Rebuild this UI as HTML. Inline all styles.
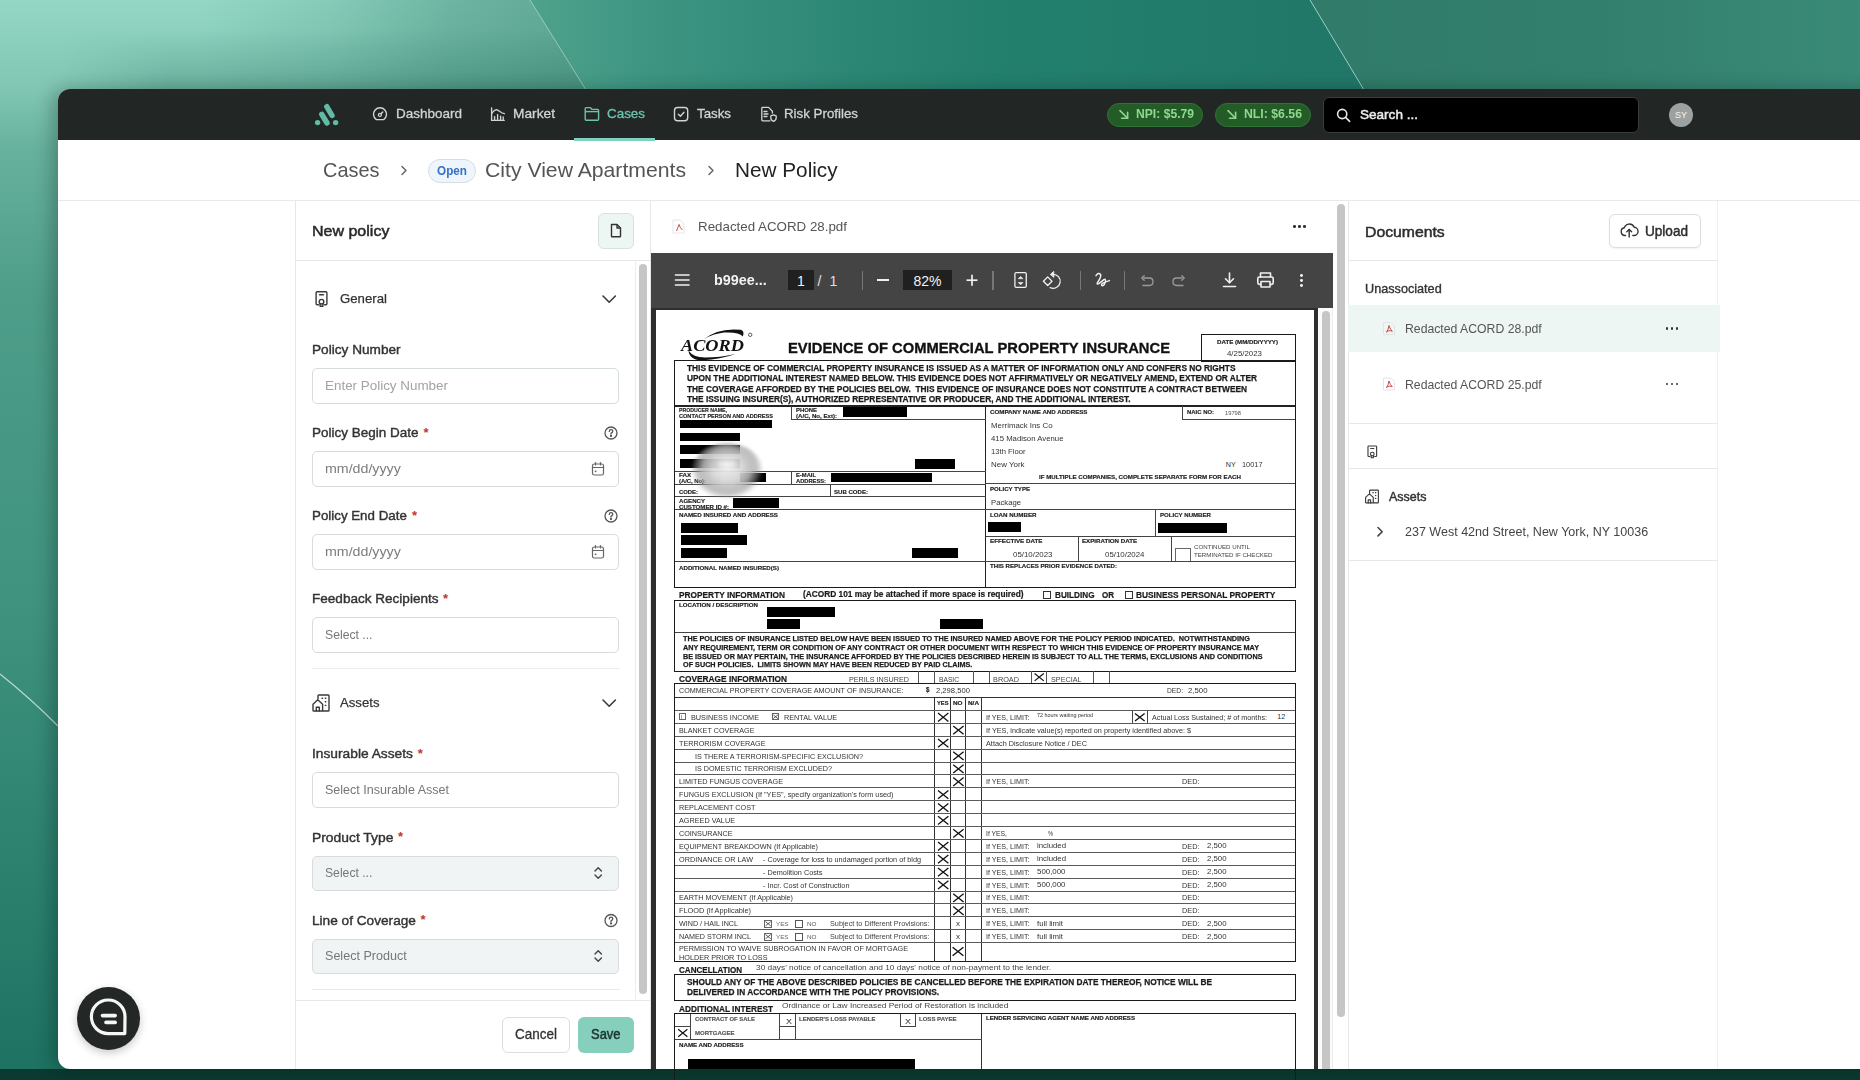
<!DOCTYPE html>
<html><head><meta charset="utf-8"><style>
html,body{margin:0;padding:0;}
body{width:1860px;height:1080px;overflow:hidden;position:relative;font-family:"Liberation Sans", sans-serif;background:#0b3b31;}
.t{position:absolute;white-space:nowrap;line-height:1;}
.r{position:absolute;}
svg{position:absolute;overflow:visible;}
</style></head><body>
<div class="r" style="left:0;top:0;width:1860px;height:1080px;background:linear-gradient(180deg,#94d7c5 0px,#80c6b3 89px,#66b19d 150px,#4d9d89 300px,#3f937f 600px,#2d826f 850px,#1d7262 1069px);"></div><div class="r" style="left:0;top:0;width:1860px;height:90px;background:linear-gradient(90deg,rgba(0,0,0,0) 0px,rgba(0,0,0,0) 200px,rgba(30,110,90,0.12) 330px,rgba(30,110,90,0.32) 450px,rgba(30,110,90,0.45) 586px);"></div><div class="r" style="left:0;top:0;width:600px;height:90px;background:linear-gradient(180deg,rgba(0,0,0,0) 30px,rgba(25,95,80,0.22) 89px);-webkit-mask-image:linear-gradient(90deg,transparent 0px,transparent 62px,black 170px);"></div><div class="r" style="left:0;top:0;width:1860px;height:90px;clip-path:polygon(530px 0,1310px 0,1364px 90px,586px 90px);background:linear-gradient(90deg,#4fa28c 530px,#3d9582 650px,#2c8774 850px,#23806d 1000px,#217869 1310px);"></div><div class="r" style="left:0;top:0;width:1860px;height:90px;clip-path:polygon(1310px 0,1860px 0,1860px 90px,1364px 90px);background:linear-gradient(90deg,#307b69 1310px,#337f6d 1600px,#3a8a78 1860px);"></div><div class="r" style="left:0;top:1069px;width:1860px;height:11px;background:#0a3a30;"></div><svg style="left:0;top:0" width="1860" height="1080"><line x1="530" y1="0" x2="586" y2="90" stroke="rgba(220,255,245,0.45)" stroke-width="1"/><line x1="1310" y1="0" x2="1364" y2="90" stroke="rgba(220,255,245,0.6)" stroke-width="1"/><path d="M0 674 Q30 698 58 726" stroke="rgba(220,240,235,0.8)" stroke-width="1.2" fill="none"/></svg><div class="r" style="left:58px;top:89px;width:1830px;height:980px;background:#fff;border-radius:12px;overflow:hidden;box-shadow:-6px 0 18px rgba(0,0,0,0.25);"></div><div class="r" style="left:58px;top:89px;width:1830px;height:51px;background:#222726;border-radius:12px 0 0 0;"></div><div class="r" style="left:295px;top:200px;width:1px;height:869px;background:#e4e8e8;"></div><div class="r" style="left:649.5px;top:200px;width:1.5px;height:869px;background:#e4e8e8;"></div><div class="r" style="left:295px;top:260px;width:355px;height:1px;background:#e4e8e8;"></div><div class="t" style="left:312px;top:223.2px;font-size:15px;color:#2a2a2a;font-weight:normal;-webkit-text-stroke:0.5px #2a2a2a;transform-origin:0 50%;transform:scaleX(1.0671);">New policy</div><div class="r" style="left:598px;top:213px;width:36px;height:35.5px;background:#eef6f3;border:1px solid #d6e2de;box-sizing:border-box;border-radius:6px;"></div><svg style="left:0;top:0" width="1" height="1" fill="none" stroke="#333" stroke-width="1.4" stroke-linejoin="round">
<path d="M611.5 224.5 H617 L620.5 228 V236.2 Q620.5 236.8 619.9 236.8 H612.1 Q611.5 236.8 611.5 236.2 Z"/><path d="M617 224.5 V228 H620.5"/></svg><div class="r" style="left:635px;top:261px;width:1px;height:739px;background:#eceeee;"></div><div class="r" style="left:639px;top:264px;width:8px;height:729.5px;background:#c6c6c6;border-radius:4px;"></div><div class="r" style="left:295px;top:999.5px;width:355px;height:1.5px;background:#e6e9e9;"></div><svg style="left:0;top:0" width="1" height="1" fill="none" stroke="#3a3a3a" stroke-width="1.4" stroke-linecap="round" stroke-linejoin="round">
<path d="M318.5 304.7 H317.1 Q316.1 304.7 316.1 303.7 V292.7 Q316.1 291.7 317.1 291.7 H325.9 Q326.9 291.7 326.9 292.7 V303.7 Q326.9 304.7 325.9 304.7 H324.5"/>
<line x1="319.5" y1="294.7" x2="323.5" y2="294.7"/>
<circle cx="321.5" cy="301.7" r="2.3"/><path d="M320.1 303.5 V306.3 H322.9 V303.5"/></svg><div class="t" style="left:339.5px;top:292.3px;font-size:13.6px;color:#333;font-weight:normal;-webkit-text-stroke:0.25px #333;transform-origin:0 50%;transform:scaleX(0.9716);">General</div><svg style="left:0;top:0" width="1" height="1" fill="none" stroke="#3a3a3a" stroke-width="1.6" stroke-linecap="round" stroke-linejoin="round"><path d="M603 296 L609.2 302.2 L615.4 296"/></svg><div class="t" style="left:312px;top:343.4px;font-size:13.4px;color:#333;font-weight:normal;-webkit-text-stroke:0.4px #333;transform-origin:0 50%;transform:scaleX(1.0175);">Policy Number</div><div class="r" style="left:312px;top:368px;width:307px;height:36px;background:#fff;border:1px solid #d7dddc;box-sizing:border-box;border-radius:5px;"></div><div class="t" style="left:325px;top:379.4px;font-size:13.4px;color:#a3a3a3;font-weight:normal;transform-origin:0 50%;transform:scaleX(1.0017);">Enter Policy Number</div><div class="t" style="left:312px;top:426.4px;font-size:13.4px;color:#333;font-weight:normal;-webkit-text-stroke:0.4px #333;transform-origin:0 50%;transform:scaleX(1.0066);">Policy Begin Date</div><div class="t" style="left:423.5px;top:425.6px;font-size:13px;color:#c0392b;font-weight:bold;">*</div><svg style="left:0;top:0" width="1" height="1" fill="none" stroke="#555" stroke-width="1.3" stroke-linecap="round"><circle cx="611" cy="433" r="6"/><path d="M609.3 431.4 Q609.3 429.6 611 429.6 Q612.8 429.6 612.8 431.3 Q612.8 432.5 611 433.4 V434"/><circle cx="611" cy="435.9" r="0.5" fill="#555"/></svg><div class="r" style="left:312px;top:451px;width:307px;height:36px;background:#fff;border:1px solid #d7dddc;box-sizing:border-box;border-radius:5px;"></div><div class="t" style="left:325px;top:462.4px;font-size:13.4px;color:#7d7d7d;font-weight:normal;transform-origin:0 50%;transform:scaleX(1.0611);">mm/dd/yyyy</div><svg style="left:0;top:0" width="1" height="1" fill="none" stroke="#666" stroke-width="1.2" stroke-linecap="round"><rect x="592.5" y="464" width="11" height="11" rx="1.8"/><line x1="592.5" y1="467.5" x2="603.5" y2="467.5"/><line x1="595.5" y1="462.5" x2="595.5" y2="465"/><line x1="600.5" y1="462.5" x2="600.5" y2="465"/><rect x="594.8" y="470.5" width="1.6" height="1.6" fill="#666" stroke="none"/></svg><div class="t" style="left:312px;top:509.4px;font-size:13.4px;color:#333;font-weight:normal;-webkit-text-stroke:0.4px #333;transform-origin:0 50%;transform:scaleX(0.9949);">Policy End Date</div><div class="t" style="left:412px;top:508.6px;font-size:13px;color:#c0392b;font-weight:bold;">*</div><svg style="left:0;top:0" width="1" height="1" fill="none" stroke="#555" stroke-width="1.3" stroke-linecap="round"><circle cx="611" cy="516" r="6"/><path d="M609.3 514.4 Q609.3 512.6 611 512.6 Q612.8 512.6 612.8 514.3 Q612.8 515.5 611 516.4 V517"/><circle cx="611" cy="518.9" r="0.5" fill="#555"/></svg><div class="r" style="left:312px;top:534px;width:307px;height:36px;background:#fff;border:1px solid #d7dddc;box-sizing:border-box;border-radius:5px;"></div><div class="t" style="left:325px;top:545.4px;font-size:13.4px;color:#7d7d7d;font-weight:normal;transform-origin:0 50%;transform:scaleX(1.0611);">mm/dd/yyyy</div><svg style="left:0;top:0" width="1" height="1" fill="none" stroke="#666" stroke-width="1.2" stroke-linecap="round"><rect x="592.5" y="547" width="11" height="11" rx="1.8"/><line x1="592.5" y1="550.5" x2="603.5" y2="550.5"/><line x1="595.5" y1="545.5" x2="595.5" y2="548"/><line x1="600.5" y1="545.5" x2="600.5" y2="548"/><rect x="594.8" y="553.5" width="1.6" height="1.6" fill="#666" stroke="none"/></svg><div class="t" style="left:312px;top:592.4px;font-size:13.4px;color:#333;font-weight:normal;-webkit-text-stroke:0.4px #333;transform-origin:0 50%;transform:scaleX(1.0116);">Feedback Recipients</div><div class="t" style="left:443px;top:591.6px;font-size:13px;color:#c0392b;font-weight:bold;">*</div><div class="r" style="left:312px;top:617px;width:307px;height:36px;background:#fff;border:1px solid #d7dddc;box-sizing:border-box;border-radius:5px;"></div><div class="t" style="left:325px;top:628.4px;font-size:13.4px;color:#777;font-weight:normal;transform-origin:0 50%;transform:scaleX(0.9115);">Select ...</div><div class="r" style="left:312px;top:668px;width:308px;height:1px;background:#e9eded;"></div><svg style="left:0;top:0" width="1" height="1" fill="none" stroke="#3a3a3a" stroke-width="1.4" stroke-linecap="round" stroke-linejoin="round">
<path d="M318 698.8 V695.8 Q318 695 318.8 695 H328.2 Q329 695 329 695.8 V710.2 Q329 711 328.2 711 H313.8 Q313 711 313 710.2 V704.2 L317.8 699.8 L322.6 704.2 V711"/>
<path d="M316.3 711 V707.2 H319.3 V711"/>
<line x1="322" y1="698.2" x2="322.5" y2="698.2"/><line x1="325.3" y1="698.2" x2="325.8" y2="698.2"/>
<line x1="325.3" y1="701.8" x2="325.8" y2="701.8"/><line x1="325.3" y1="705.4" x2="325.8" y2="705.4"/></svg><div class="t" style="left:340px;top:696.3px;font-size:13.6px;color:#333;font-weight:normal;-webkit-text-stroke:0.25px #333;transform-origin:0 50%;transform:scaleX(0.9682);">Assets</div><svg style="left:0;top:0" width="1" height="1" fill="none" stroke="#3a3a3a" stroke-width="1.6" stroke-linecap="round" stroke-linejoin="round"><path d="M603 700 L609.2 706.2 L615.4 700"/></svg><div class="t" style="left:312px;top:747.4px;font-size:13.4px;color:#333;font-weight:normal;-webkit-text-stroke:0.4px #333;transform-origin:0 50%;transform:scaleX(1.0278);">Insurable Assets</div><div class="t" style="left:417.7px;top:746.6px;font-size:13px;color:#c0392b;font-weight:bold;">*</div><div class="r" style="left:312px;top:772px;width:307px;height:36px;background:#fff;border:1px solid #d7dddc;box-sizing:border-box;border-radius:5px;"></div><div class="t" style="left:325px;top:783.4px;font-size:13.4px;color:#777;font-weight:normal;transform-origin:0 50%;transform:scaleX(0.9358);">Select Insurable Asset</div><div class="t" style="left:312px;top:830.9px;font-size:13.4px;color:#333;font-weight:normal;-webkit-text-stroke:0.4px #333;transform-origin:0 50%;transform:scaleX(1.0349);">Product Type</div><div class="t" style="left:398px;top:830.1px;font-size:13px;color:#c0392b;font-weight:bold;">*</div><div class="r" style="left:312px;top:855.5px;width:307px;height:35.0px;background:#f1f4f4;border:1px solid #d7dddc;box-sizing:border-box;border-radius:5px;"></div><div class="t" style="left:325px;top:866.4px;font-size:13.4px;color:#777;font-weight:normal;transform-origin:0 50%;transform:scaleX(0.9096);">Select ...</div><svg style="left:0;top:0" width="1" height="1" fill="none" stroke="#444" stroke-width="1.4" stroke-linecap="round" stroke-linejoin="round"><path d="M595 871 L598.2 867.8 L601.4 871"/><path d="M595 875 L598.2 878.2 L601.4 875"/></svg><div class="t" style="left:312px;top:913.9px;font-size:13.4px;color:#333;font-weight:normal;-webkit-text-stroke:0.4px #333;transform-origin:0 50%;transform:scaleX(1.0186);">Line of Coverage</div><div class="t" style="left:420.6px;top:913.1px;font-size:13px;color:#c0392b;font-weight:bold;">*</div><svg style="left:0;top:0" width="1" height="1" fill="none" stroke="#555" stroke-width="1.3" stroke-linecap="round"><circle cx="611" cy="920.5" r="6"/><path d="M609.3 918.9 Q609.3 917.1 611 917.1 Q612.8 917.1 612.8 918.8 Q612.8 920.0 611 920.9 V921.5"/><circle cx="611" cy="923.4" r="0.5" fill="#555"/></svg><div class="r" style="left:312px;top:938.5px;width:307px;height:35.0px;background:#f1f4f4;border:1px solid #d7dddc;box-sizing:border-box;border-radius:5px;"></div><div class="t" style="left:325px;top:949.4px;font-size:13.4px;color:#777;font-weight:normal;transform-origin:0 50%;transform:scaleX(0.9381);">Select Product</div><svg style="left:0;top:0" width="1" height="1" fill="none" stroke="#444" stroke-width="1.4" stroke-linecap="round" stroke-linejoin="round"><path d="M595 954 L598.2 950.8 L601.4 954"/><path d="M595 958 L598.2 961.2 L601.4 958"/></svg><div class="r" style="left:312px;top:989px;width:308px;height:1px;background:#e6eaea;"></div><div class="r" style="left:502px;top:1017px;width:68px;height:35.5px;background:#fff;border:1px solid #dadfdf;box-sizing:border-box;border-radius:6px;"></div><div class="t" style="left:515px;top:1028.2px;font-size:13.8px;color:#333;font-weight:normal;-webkit-text-stroke:0.3px #333;transform-origin:0 50%;transform:scaleX(0.9778);">Cancel</div><div class="r" style="left:578px;top:1017px;width:56px;height:35.5px;background:#86cfbd;border-radius:6px;"></div><div class="t" style="left:591.3px;top:1028.2px;font-size:13.8px;color:#1d3530;font-weight:normal;-webkit-text-stroke:0.5px #1d3530;transform-origin:0 50%;transform:scaleX(0.9379);">Save</div><div class="r" style="left:77px;top:987px;width:63px;height:63px;border-radius:50%;background:#232726;box-shadow:0 3px 9px rgba(0,0,0,0.22);"></div><svg style="left:0;top:0" width="1" height="1" fill="none" stroke="#f6f6f6" stroke-width="3.2" stroke-linecap="round" stroke-linejoin="round">
<path d="M124.8 1033.6 H108.3 A16.8 16.8 0 1 1 125 1016.8 Z"/>
<line x1="102.5" y1="1015.6" x2="115.2" y2="1015.6" stroke-width="3.6"/><line x1="106" y1="1022.4" x2="115.2" y2="1022.4" stroke-width="3.6"/></svg><svg style="left:0;top:0" width="1" height="1" fill="none" stroke-width="1"><path d="M673 220 H680 L684 224 V233 H673 Z" stroke="#e6e6e6"/><path d="M676.5 231 Q678 227 679 224.5 Q680 228 682.5 230" stroke="#c23a3a" stroke-width="0.9"/></svg><div class="t" style="left:698px;top:219.9px;font-size:13.5px;color:#555;font-weight:normal;transform-origin:0 50%;transform:scaleX(0.9878);">Redacted ACORD 28.pdf</div><div class="r" style="left:1293px;top:225px;width:2.5px;height:2.5px;border-radius:50%;background:#333;"></div><div class="r" style="left:1298px;top:225px;width:2.5px;height:2.5px;border-radius:50%;background:#333;"></div><div class="r" style="left:1303px;top:225px;width:2.5px;height:2.5px;border-radius:50%;background:#333;"></div><div class="r" style="left:651px;top:252.5px;width:682px;height:55.5px;background:#444444;"></div><div class="r" style="left:651px;top:308px;width:667px;height:761px;background:#2e2e2e;"></div><div class="r" style="left:1318px;top:308px;width:15px;height:761px;background:#fbfbfb;"></div><div class="r" style="left:1322px;top:311px;width:8px;height:770px;background:#c6c6c6;border-radius:4px 4px 0 0;clip-path:inset(0 0 12px 0);"></div><div class="r" style="left:1332px;top:308px;width:1px;height:761px;background:#ececec;"></div><div class="r" style="left:656px;top:310px;width:658px;height:759px;background:#ffffff;"></div><div class="r" style="left:1333px;top:200px;width:15px;height:869px;background:#ffffff;"></div><div class="r" style="left:1337px;top:204px;width:8px;height:813px;background:#c6c6c6;border-radius:4px;"></div><div class="r" style="left:1347.5px;top:200px;width:1.0px;height:869px;background:#e4e8e8;"></div><svg style="left:0;top:0" width="1" height="1" fill="none" stroke="#f0f0f0" stroke-width="1.6" stroke-linecap="round">
<line x1="675.5" y1="275" x2="689" y2="275"/><line x1="675.5" y1="280" x2="689" y2="280"/><line x1="675.5" y1="285" x2="689" y2="285"/></svg><div class="t" style="left:714px;top:272.9px;font-size:14.4px;color:#f2f2f2;font-weight:bold;transform-origin:0 50%;transform:scaleX(0.9979);">b99ee...</div><div class="r" style="left:788px;top:270px;width:26px;height:20px;background:#202020;"></div><div class="t" style="left:801px;top:273.6px;font-size:14px;color:#f2f2f2;font-weight:normal;transform:translateX(-50%) ;">1</div><div class="t" style="left:817.5px;top:273.6px;font-size:14px;color:#e0e0e0;font-weight:normal;">/</div><div class="t" style="left:829.5px;top:273.6px;font-size:14px;color:#e0e0e0;font-weight:normal;">1</div><div class="r" style="left:862.3px;top:270.5px;width:1.2000000000000455px;height:19.5px;background:#777;"></div><div class="r" style="left:877px;top:279.3px;width:12px;height:1.6999999999999886px;background:#f0f0f0;"></div><div class="r" style="left:903px;top:270px;width:49px;height:20px;background:#202020;"></div><div class="t" style="left:927.5px;top:273.6px;font-size:14px;color:#f2f2f2;font-weight:normal;transform:translateX(-50%) ;">82%</div><svg style="left:0;top:0" width="1" height="1" fill="none" stroke="#f0f0f0" stroke-width="1.7"><line x1="966.5" y1="280.2" x2="977.5" y2="280.2"/><line x1="972" y1="274.7" x2="972" y2="285.7"/></svg><div class="r" style="left:992.4px;top:270.5px;width:1.2000000000000455px;height:19.5px;background:#777;"></div><svg style="left:0;top:0" width="1" height="1" fill="none" stroke="#f0f0f0" stroke-width="1.3" stroke-linecap="round" stroke-linejoin="round">
<rect x="1014.9" y="272.6" width="11.4" height="14.8" rx="1.4"/>
<path d="M1018.6 278.4 L1020.6 276.4 L1022.6 278.4 Z" fill="#f0f0f0" stroke-width="0.8"/><path d="M1018.6 282.8 L1020.6 284.8 L1022.6 282.8 Z" fill="#f0f0f0" stroke-width="0.8"/>
<path d="M1043.4 281.2 L1047.7 276.9 L1052 281.2 L1047.7 285.5 Z"/>
<path d="M1052.8 274.3 A7 7 0 1 1 1050.2 287.6"/><path d="M1050.6 274.2 L1053.8 271.4 L1053.8 277 Z" fill="#f0f0f0" stroke-width="0.9"/>
<path stroke-width="1.5" d="M1096 275.6 Q1098.6 272.2 1100.4 274.2 Q1101.8 276.6 1097.6 282.4 Q1096.2 284.8 1098.8 283.6 Q1101.8 281.4 1103.8 279.6 Q1106.2 278.6 1105.2 282.2 Q1103.8 286.6 1101.6 285.4 Q1100.4 283.4 1109.4 280.6"/>
</svg><div class="r" style="left:1080px;top:270.5px;width:1.2000000000000455px;height:19.5px;background:#777;"></div><div class="r" style="left:1124.3px;top:270.5px;width:1.2000000000000455px;height:19.5px;background:#777;"></div><svg style="left:0;top:0" width="1" height="1" fill="none" stroke="#9a9a9a" stroke-width="1.3" stroke-linecap="round" stroke-linejoin="round">
<path d="M1144 278 H1149.5 Q1153 278 1153 281.8 Q1153 285.5 1149.5 285.5 H1143"/><path d="M1144.2 275.7 L1141.8 278 L1144.2 280.3"/>
<path d="M1182 278 H1176.5 Q1173 278 1173 281.8 Q1173 285.5 1176.5 285.5 H1183"/><path d="M1181.8 275.7 L1184.2 278 L1181.8 280.3"/>
</svg><svg style="left:0;top:0" width="1" height="1" fill="none" stroke="#f0f0f0" stroke-width="1.6" stroke-linecap="round" stroke-linejoin="round">
<line x1="1229.5" y1="273" x2="1229.5" y2="282.5"/><path d="M1225.5 278.8 L1229.5 282.8 L1233.5 278.8"/><line x1="1223.5" y1="286.5" x2="1235.5" y2="286.5"/>
<path d="M1260.5 277 V273 H1270.5 V277"/><rect x="1257.8" y="277" width="15.4" height="7.4" rx="1.6"/><rect x="1261" y="281.5" width="9" height="5.5" fill="#444444"/>
</svg><div class="r" style="left:1299.8px;top:273.8px;width:2.8px;height:2.8px;border-radius:50%;background:#f0f0f0;"></div><div class="r" style="left:1299.8px;top:278.8px;width:2.8px;height:2.8px;border-radius:50%;background:#f0f0f0;"></div><div class="r" style="left:1299.8px;top:283.8px;width:2.8px;height:2.8px;border-radius:50%;background:#f0f0f0;"></div><div class="r" style="left:1716.8px;top:200px;width:1.2000000000000455px;height:869px;background:#eef0f0;"></div><div class="r" style="left:1348px;top:260px;width:369px;height:1px;background:#e4e8e8;"></div><div class="t" style="left:1364.5px;top:223.7px;font-size:15px;color:#2d2d2d;font-weight:normal;-webkit-text-stroke:0.5px #2d2d2d;transform-origin:0 50%;transform:scaleX(1.0504);">Documents</div><div class="r" style="left:1608.5px;top:213.5px;width:92px;height:34px;background:#fff;border:1px solid #dadfdf;box-sizing:border-box;border-radius:6px;box-shadow:0 1px 2px rgba(0,0,0,0.06);"></div><svg style="left:0;top:0" width="1" height="1" fill="none" stroke="#333" stroke-width="1.4" stroke-linecap="round" stroke-linejoin="round">
<path d="M1625.5 235.5 H1624.8 A3.9 3.9 0 0 1 1624.3 227.8 A5.3 5.3 0 0 1 1634.2 227.2 A3.6 3.6 0 0 1 1633.6 235.5 H1632.8"/>
<line x1="1629.2" y1="229.5" x2="1629.2" y2="237"/><path d="M1626.8 231.8 L1629.2 229.4 L1631.6 231.8"/></svg><div class="t" style="left:1645px;top:223.6px;font-size:14px;color:#2d2d2d;font-weight:normal;-webkit-text-stroke:0.45px #2d2d2d;transform-origin:0 50%;transform:scaleX(0.9690);">Upload</div><div class="t" style="left:1365px;top:282.1px;font-size:13px;color:#333;font-weight:normal;-webkit-text-stroke:0.35px #333;transform-origin:0 50%;transform:scaleX(0.9736);">Unassociated</div><div class="r" style="left:1348px;top:305px;width:371.5px;height:46.5px;background:#eef6f3;"></div><svg style="left:0;top:0" width="1" height="1" fill="none" stroke-width="0.9"><path d="M1383.5 322.5 H1391.0 L1394.5 326.0 V334.5 H1383.5 Z" stroke="#e2e2e2"/><path d="M1386.5 332.5 Q1388.5 329.0 1389.0 325.5 Q1390.0 329.5 1392.5 331.5 M1386.7 331.5 Q1389.5 330.0 1392.0 331.0" stroke="#c23a3a"/></svg><div class="t" style="left:1404.5px;top:322.1px;font-size:13px;color:#555;font-weight:normal;transform-origin:0 50%;transform:scaleX(0.9411);">Redacted ACORD 28.pdf</div><svg style="left:0;top:0" width="1" height="1" fill="none" stroke-width="0.9"><path d="M1383.5 378 H1391.0 L1394.5 381.5 V390 H1383.5 Z" stroke="#e2e2e2"/><path d="M1386.5 388 Q1388.5 384.5 1389.0 381 Q1390.0 385 1392.5 387 M1386.7 387 Q1389.5 385.5 1392.0 386.5" stroke="#c23a3a"/></svg><div class="t" style="left:1404.5px;top:377.6px;font-size:13px;color:#555;font-weight:normal;transform-origin:0 50%;transform:scaleX(0.9411);">Redacted ACORD 25.pdf</div><div class="r" style="left:1665.5px;top:327.1px;width:2.5px;height:2.5px;border-radius:50%;background:#333;"></div><div class="r" style="left:1670.5px;top:327.1px;width:2.5px;height:2.5px;border-radius:50%;background:#333;"></div><div class="r" style="left:1675.5px;top:327.1px;width:2.5px;height:2.5px;border-radius:50%;background:#333;"></div><div class="r" style="left:1665.5px;top:382.6px;width:2.5px;height:2.5px;border-radius:50%;background:#333;"></div><div class="r" style="left:1670.5px;top:382.6px;width:2.5px;height:2.5px;border-radius:50%;background:#333;"></div><div class="r" style="left:1675.5px;top:382.6px;width:2.5px;height:2.5px;border-radius:50%;background:#333;"></div><div class="r" style="left:1348px;top:423px;width:369px;height:1px;background:#e4e8e8;"></div><div class="r" style="left:0;top:0;transform-origin:1372.3px 451.5px;transform:scale(0.8);"><svg style="left:0;top:0" width="1" height="1" fill="none" stroke="#3a3a3a" stroke-width="1.4" stroke-linecap="round" stroke-linejoin="round">
<path d="M1369.3 457.7 H1367.8999999999999 Q1366.8999999999999 457.7 1366.8999999999999 456.7 V445.7 Q1366.8999999999999 444.7 1367.8999999999999 444.7 H1376.7 Q1377.7 444.7 1377.7 445.7 V456.7 Q1377.7 457.7 1376.7 457.7 H1375.3"/>
<line x1="1370.3" y1="447.7" x2="1374.3" y2="447.7"/>
<circle cx="1372.3" cy="454.7" r="2.3"/><path d="M1370.8999999999999 456.5 V459.3 H1373.7 V456.5"/></svg></div><div class="r" style="left:1348px;top:467.5px;width:369px;height:1.0px;background:#e4e8e8;"></div><div class="r" style="left:0;top:0;transform-origin:1365.6px 496.5px;transform:scale(0.8);"><svg style="left:0;top:0" width="1" height="1" fill="none" stroke="#3a3a3a" stroke-width="1.4" stroke-linecap="round" stroke-linejoin="round">
<path d="M1370.6 492.3 V489.3 Q1370.6 488.5 1371.3999999999999 488.5 H1380.8 Q1381.6 488.5 1381.6 489.3 V503.7 Q1381.6 504.5 1380.8 504.5 H1366.3999999999999 Q1365.6 504.5 1365.6 503.7 V497.7 L1370.3999999999999 493.3 L1375.1999999999998 497.7 V504.5"/>
<path d="M1368.8999999999999 504.5 V500.7 H1371.8999999999999 V504.5"/>
<line x1="1374.6" y1="491.7" x2="1375.1" y2="491.7"/><line x1="1377.8999999999999" y1="491.7" x2="1378.3999999999999" y2="491.7"/>
<line x1="1377.8999999999999" y1="495.3" x2="1378.3999999999999" y2="495.3"/><line x1="1377.8999999999999" y1="498.9" x2="1378.3999999999999" y2="498.9"/></svg></div><div class="t" style="left:1388.5px;top:490.1px;font-size:13px;color:#333;font-weight:normal;-webkit-text-stroke:0.45px #333;transform-origin:0 50%;transform:scaleX(0.9586);">Assets</div><svg style="left:0;top:0" width="1" height="1" fill="none" stroke="#444" stroke-width="1.6" stroke-linecap="round" stroke-linejoin="round"><path d="M1378 527.5 L1382.2 531.7 L1378 535.9"/></svg><div class="t" style="left:1404.5px;top:525.7px;font-size:12.8px;color:#444;font-weight:normal;transform-origin:0 50%;transform:scaleX(0.9786);">237 West 42nd Street, New York, NY 10036</div><div class="r" style="left:1348px;top:560px;width:369px;height:1px;background:#e4e8e8;"></div><svg style="left:0;top:0" width="1" height="1">
<path d="M703.5 339.5 Q718 327.5 740.5 329.8 Q745 331 742.8 336.5 Q739 331.8 724 332.6 Q713 333.8 703.5 339.5 Z" fill="#111"/>
<path d="M688.5 350.5 Q689.5 360.5 703 360.3 Q720 359.5 735.5 354 Q720 357.6 705 357.6 Q693 357.4 688.5 350.5 Z" fill="#111"/>
<circle cx="750.2" cy="334.8" r="1.7" fill="none" stroke="#333" stroke-width="0.8"/>
</svg><div class="t" style="left:681px;top:338.4px;font-size:16.5px;color:#111;font-weight:bold;font-family:'Liberation Serif', serif;transform-origin:0 50%;transform:scaleX(1.1074);font-style:italic;">ACORD</div><div class="t" style="left:787.8px;top:340.6px;font-size:14.6px;color:#111;font-weight:bold;transform-origin:0 50%;transform:scaleX(1.0102);-webkit-text-stroke:0.3px #111;">EVIDENCE OF COMMERCIAL PROPERTY INSURANCE</div><div class="r" style="left:1200.55px;top:334.25px;width:95.20000000000005px;height:27.5px;border:1.5px solid #1a1a1a;box-sizing:border-box;"></div><div class="t" style="left:1217px;top:339.6px;font-size:5.4px;color:#222;font-weight:bold;transform-origin:0 50%;transform:scaleX(1.1399);-webkit-text-stroke:0.15px #222;">DATE (MM/DD/YYYY)</div><div class="t" style="left:1227px;top:350.3px;font-size:7px;color:#333;font-weight:normal;transform-origin:0 50%;transform:scaleX(1.1234);">4/25/2023</div><div class="r" style="left:674.15px;top:360.15px;width:621.7px;height:228.09999999999997px;border:1.7px solid #1a1a1a;box-sizing:border-box;"></div><div class="t" style="left:687px;top:364.0px;font-size:8.6px;color:#1a1a1a;font-weight:bold;transform-origin:0 50%;transform:scaleX(0.9686);-webkit-text-stroke:0.25px #1a1a1a;">THIS EVIDENCE OF COMMERCIAL PROPERTY INSURANCE IS ISSUED AS A MATTER OF INFORMATION ONLY AND CONFERS NO RIGHTS</div><div class="t" style="left:687px;top:374.3px;font-size:8.6px;color:#1a1a1a;font-weight:bold;transform-origin:0 50%;transform:scaleX(0.9682);-webkit-text-stroke:0.25px #1a1a1a;">UPON THE ADDITIONAL INTEREST NAMED BELOW. THIS EVIDENCE DOES NOT AFFIRMATIVELY OR NEGATIVELY AMEND, EXTEND OR ALTER</div><div class="t" style="left:687px;top:384.6px;font-size:8.6px;color:#1a1a1a;font-weight:bold;transform-origin:0 50%;transform:scaleX(0.9688);-webkit-text-stroke:0.25px #1a1a1a;">THE COVERAGE AFFORDED BY THE POLICIES BELOW.&nbsp; THIS EVIDENCE OF INSURANCE DOES NOT CONSTITUTE A CONTRACT BETWEEN</div><div class="t" style="left:687px;top:394.9px;font-size:8.6px;color:#1a1a1a;font-weight:bold;transform-origin:0 50%;transform:scaleX(0.9686);-webkit-text-stroke:0.25px #1a1a1a;">THE ISSUING INSURER(S), AUTHORIZED REPRESENTATIVE OR PRODUCER, AND THE ADDITIONAL INTEREST.</div><div class="r" style="left:675px;top:405px;width:620px;height:2px;background:#222;"></div><div class="r" style="left:985px;top:406px;width:1px;height:181px;background:#222;"></div><div class="t" style="left:679px;top:408.0px;font-size:5.4px;color:#222;font-weight:bold;transform-origin:0 50%;transform:scaleX(0.9654);-webkit-text-stroke:0.15px #222;">PRODUCER NAME,</div><div class="t" style="left:679px;top:414.0px;font-size:5.4px;color:#222;font-weight:bold;transform-origin:0 50%;transform:scaleX(1.0346);-webkit-text-stroke:0.15px #222;">CONTACT PERSON AND ADDRESS</div><div class="r" style="left:791px;top:406px;width:1px;height:13px;background:#444;"></div><div class="r" style="left:791px;top:419px;width:195px;height:1px;background:#444;"></div><div class="t" style="left:796px;top:408.2px;font-size:5.4px;color:#222;font-weight:bold;transform-origin:0 50%;transform:scaleX(1.0954);-webkit-text-stroke:0.15px #222;">PHONE</div><div class="t" style="left:796px;top:414.2px;font-size:5.4px;color:#222;font-weight:bold;transform-origin:0 50%;transform:scaleX(1.1315);-webkit-text-stroke:0.15px #222;">(A/C, No, Ext):</div><div class="r" style="left:842.8px;top:407.3px;width:63.80000000000007px;height:9.399999999999977px;background:#000;"></div><div class="r" style="left:679.5px;top:420.2px;width:92.5px;height:8.0px;background:#000;"></div><div class="r" style="left:679.5px;top:432.7px;width:60.299999999999955px;height:8.800000000000011px;background:#000;"></div><div class="r" style="left:679.5px;top:445px;width:60.299999999999955px;height:9px;background:#000;"></div><div class="r" style="left:679.5px;top:459.3px;width:60.5px;height:8.899999999999977px;background:#000;"></div><div class="r" style="left:914.6px;top:459.3px;width:40.799999999999955px;height:9.399999999999977px;background:#000;"></div><div class="r" style="left:675px;top:471px;width:311px;height:1px;background:#444;"></div><div class="t" style="left:679px;top:472.7px;font-size:5.4px;color:#222;font-weight:bold;transform-origin:0 50%;transform:scaleX(1.1446);-webkit-text-stroke:0.15px #222;">FAX</div><div class="t" style="left:679px;top:478.6px;font-size:5.4px;color:#222;font-weight:bold;transform-origin:0 50%;transform:scaleX(1.0861);-webkit-text-stroke:0.15px #222;">(A/C, No):</div><div class="r" style="left:740px;top:472.5px;width:25.600000000000023px;height:9.399999999999977px;background:#000;"></div><div class="r" style="left:791px;top:472px;width:1px;height:12px;background:#444;"></div><div class="t" style="left:796px;top:472.7px;font-size:5.4px;color:#222;font-weight:bold;transform-origin:0 50%;transform:scaleX(1.0765);-webkit-text-stroke:0.15px #222;">E-MAIL</div><div class="t" style="left:796px;top:478.6px;font-size:5.4px;color:#222;font-weight:bold;transform-origin:0 50%;transform:scaleX(1.0655);-webkit-text-stroke:0.15px #222;">ADDRESS:</div><div class="r" style="left:830.7px;top:472.5px;width:101.69999999999993px;height:9.5px;background:#000;"></div><div class="r" style="left:675px;top:484px;width:311px;height:1px;background:#444;"></div><div class="t" style="left:679px;top:489.6px;font-size:5.4px;color:#222;font-weight:bold;transform-origin:0 50%;transform:scaleX(1.0935);-webkit-text-stroke:0.15px #222;">CODE:</div><div class="r" style="left:830px;top:484px;width:1px;height:13px;background:#444;"></div><div class="t" style="left:834px;top:489.6px;font-size:5.4px;color:#222;font-weight:bold;transform-origin:0 50%;transform:scaleX(1.1240);-webkit-text-stroke:0.15px #222;">SUB CODE:</div><div class="r" style="left:675px;top:496px;width:311px;height:1px;background:#444;"></div><div class="t" style="left:679px;top:498.6px;font-size:5.4px;color:#222;font-weight:bold;transform-origin:0 50%;transform:scaleX(1.1266);-webkit-text-stroke:0.15px #222;">AGENCY</div><div class="t" style="left:679px;top:504.6px;font-size:5.4px;color:#222;font-weight:bold;transform-origin:0 50%;transform:scaleX(1.1380);-webkit-text-stroke:0.15px #222;">CUSTOMER ID #:</div><div class="r" style="left:732.7px;top:497.8px;width:46.299999999999955px;height:9.800000000000011px;background:#000;"></div><div class="r" style="left:675px;top:509px;width:311px;height:1px;background:#444;"></div><div class="t" style="left:679px;top:513.4px;font-size:5.4px;color:#222;font-weight:bold;transform-origin:0 50%;transform:scaleX(1.1491);-webkit-text-stroke:0.15px #222;">NAMED INSURED AND ADDRESS</div><div class="r" style="left:681px;top:523.2px;width:57px;height:9.599999999999909px;background:#000;"></div><div class="r" style="left:681px;top:535.4px;width:65.60000000000002px;height:9.800000000000068px;background:#000;"></div><div class="r" style="left:681px;top:547.9px;width:46px;height:9.700000000000045px;background:#000;"></div><div class="r" style="left:912.3px;top:547.9px;width:45.700000000000045px;height:9.700000000000045px;background:#000;"></div><div class="r" style="left:675px;top:561px;width:311px;height:1px;background:#444;"></div><div class="t" style="left:679px;top:565.6px;font-size:5.4px;color:#222;font-weight:bold;transform-origin:0 50%;transform:scaleX(1.1447);-webkit-text-stroke:0.15px #222;">ADDITIONAL NAMED INSURED(S)</div><div class="t" style="left:989.5px;top:409.6px;font-size:5.4px;color:#222;font-weight:bold;transform-origin:0 50%;transform:scaleX(1.1462);-webkit-text-stroke:0.15px #222;">COMPANY NAME AND ADDRESS</div><div class="r" style="left:1182px;top:406px;width:1px;height:14px;background:#444;"></div><div class="r" style="left:1182px;top:419px;width:113px;height:1px;background:#444;"></div><div class="t" style="left:1186.5px;top:410.4px;font-size:5.4px;color:#222;font-weight:bold;transform-origin:0 50%;transform:scaleX(1.0992);-webkit-text-stroke:0.15px #222;">NAIC NO:</div><div class="t" style="left:1225px;top:410.8px;font-size:5.5px;color:#555;font-weight:normal;transform-origin:0 50%;transform:scaleX(1.0460);">19798</div><div class="t" style="left:990.5px;top:422.3px;font-size:7.2px;color:#333;font-weight:normal;transform-origin:0 50%;transform:scaleX(1.0921);">Merrimack Ins Co</div><div class="t" style="left:990.5px;top:435.1px;font-size:7.2px;color:#333;font-weight:normal;transform-origin:0 50%;transform:scaleX(1.0818);">415 Madison Avenue</div><div class="t" style="left:990.5px;top:447.9px;font-size:7.2px;color:#333;font-weight:normal;transform-origin:0 50%;transform:scaleX(1.0656);">13th Floor</div><div class="t" style="left:990.5px;top:460.7px;font-size:7.2px;color:#333;font-weight:normal;transform-origin:0 50%;transform:scaleX(1.1029);">New York</div><div class="t" style="left:1225.7px;top:460.7px;font-size:7.2px;color:#333;font-weight:normal;transform-origin:0 50%;transform:scaleX(1.0000);">NY</div><div class="t" style="left:1242.2px;top:460.7px;font-size:7.2px;color:#333;font-weight:normal;transform-origin:0 50%;transform:scaleX(1.0250);">10017</div><div class="t" style="left:1038.5px;top:474.9px;font-size:5.4px;color:#222;font-weight:bold;transform-origin:0 50%;transform:scaleX(1.1439);-webkit-text-stroke:0.15px #222;">IF MULTIPLE COMPANIES, COMPLETE SEPARATE FORM FOR EACH</div><div class="r" style="left:986px;top:483px;width:309px;height:1px;background:#444;"></div><div class="t" style="left:989.5px;top:487.3px;font-size:5.4px;color:#222;font-weight:bold;transform-origin:0 50%;transform:scaleX(1.1248);-webkit-text-stroke:0.15px #222;">POLICY TYPE</div><div class="t" style="left:990.5px;top:498.8px;font-size:7.5px;color:#333;font-weight:normal;transform-origin:0 50%;transform:scaleX(1.0278);">Package</div><div class="r" style="left:986px;top:509px;width:309px;height:1px;background:#444;"></div><div class="t" style="left:989.5px;top:512.7px;font-size:5.4px;color:#222;font-weight:bold;transform-origin:0 50%;transform:scaleX(1.1499);-webkit-text-stroke:0.15px #222;">LOAN NUMBER</div><div class="r" style="left:1155px;top:510px;width:1px;height:26px;background:#444;"></div><div class="t" style="left:1159.5px;top:512.7px;font-size:5.4px;color:#222;font-weight:bold;transform-origin:0 50%;transform:scaleX(1.1298);-webkit-text-stroke:0.15px #222;">POLICY NUMBER</div><div class="r" style="left:987.5px;top:522px;width:33.5px;height:10px;background:#000;"></div><div class="r" style="left:1158.3px;top:523px;width:68.70000000000005px;height:10px;background:#000;"></div><div class="r" style="left:986px;top:536px;width:309px;height:1px;background:#444;"></div><div class="t" style="left:989.5px;top:538.6px;font-size:5.4px;color:#222;font-weight:bold;transform-origin:0 50%;transform:scaleX(1.1554);-webkit-text-stroke:0.15px #222;">EFFECTIVE DATE</div><div class="r" style="left:1078px;top:536px;width:1px;height:26px;background:#444;"></div><div class="t" style="left:1082.2px;top:538.6px;font-size:5.4px;color:#222;font-weight:bold;transform-origin:0 50%;transform:scaleX(1.1381);-webkit-text-stroke:0.15px #222;">EXPIRATION DATE</div><div class="r" style="left:1171px;top:536px;width:1px;height:26px;background:#444;"></div><div class="t" style="left:1012.5px;top:551.4px;font-size:7px;color:#333;font-weight:normal;transform-origin:0 50%;transform:scaleX(1.1271);">05/10/2023</div><div class="t" style="left:1105.2px;top:551.4px;font-size:7px;color:#333;font-weight:normal;transform-origin:0 50%;transform:scaleX(1.1271);">05/10/2024</div><div class="r" style="left:1175px;top:548.4px;width:16px;height:13.5px;border:1px solid #666;border-bottom:none;box-sizing:border-box;"></div><div class="t" style="left:1194.3px;top:544.6px;font-size:5.6px;color:#444;font-weight:normal;transform-origin:0 50%;transform:scaleX(1.0987);">CONTINUED UNTIL</div><div class="t" style="left:1194.3px;top:552.9px;font-size:5.6px;color:#444;font-weight:normal;transform-origin:0 50%;transform:scaleX(1.0998);">TERMINATED IF CHECKED</div><div class="r" style="left:986px;top:561px;width:309px;height:1px;background:#444;"></div><div class="t" style="left:989.5px;top:564.2px;font-size:5.4px;color:#222;font-weight:bold;transform-origin:0 50%;transform:scaleX(1.1317);-webkit-text-stroke:0.15px #222;">THIS REPLACES PRIOR EVIDENCE DATED:</div><div class="t" style="left:679px;top:591.0px;font-size:8.5px;color:#1a1a1a;font-weight:bold;transform-origin:0 50%;transform:scaleX(0.9786);-webkit-text-stroke:0.2px #1a1a1a;">PROPERTY INFORMATION</div><div class="t" style="left:803.4px;top:591.2px;font-size:8.2px;color:#1a1a1a;font-weight:bold;transform-origin:0 50%;transform:scaleX(1.0159);-webkit-text-stroke:0.2px #1a1a1a;">(ACORD 101 may be attached if more space is required)</div><div class="r" style="left:1043px;top:590.6px;width:8.3px;height:8.3px;border:1px solid #333;box-sizing:border-box;"></div><div class="t" style="left:1054.9px;top:591.0px;font-size:8.5px;color:#1a1a1a;font-weight:bold;transform-origin:0 50%;transform:scaleX(0.9612);-webkit-text-stroke:0.2px #1a1a1a;">BUILDING</div><div class="t" style="left:1102px;top:591.0px;font-size:8.5px;color:#1a1a1a;font-weight:bold;transform-origin:0 50%;transform:scaleX(0.9412);-webkit-text-stroke:0.2px #1a1a1a;">OR</div><div class="r" style="left:1124.6px;top:590.6px;width:8.3px;height:8.3px;border:1px solid #333;box-sizing:border-box;"></div><div class="t" style="left:1136px;top:591.0px;font-size:8.5px;color:#1a1a1a;font-weight:bold;transform-origin:0 50%;transform:scaleX(0.9816);-webkit-text-stroke:0.2px #1a1a1a;">BUSINESS PERSONAL PROPERTY</div><div class="r" style="left:674.2px;top:599.9000000000001px;width:621.6px;height:71.99999999999997px;border:1.6px solid #1a1a1a;box-sizing:border-box;"></div><div class="t" style="left:679px;top:603.3px;font-size:5.4px;color:#222;font-weight:bold;transform-origin:0 50%;transform:scaleX(1.1434);-webkit-text-stroke:0.15px #222;">LOCATION / DESCRIPTION</div><div class="r" style="left:766.5px;top:607px;width:68.79999999999995px;height:10.200000000000045px;background:#000;"></div><div class="r" style="left:766.5px;top:619.4px;width:33.299999999999955px;height:9.600000000000023px;background:#000;"></div><div class="r" style="left:940.3px;top:619.4px;width:42.700000000000045px;height:9.600000000000023px;background:#000;"></div><div class="r" style="left:675px;top:632px;width:620px;height:1px;background:#444;"></div><div class="t" style="left:683px;top:635.1px;font-size:7.6px;color:#1a1a1a;font-weight:bold;transform-origin:0 50%;transform:scaleX(0.9547);-webkit-text-stroke:0.25px #1a1a1a;">THE POLICIES OF INSURANCE LISTED BELOW HAVE BEEN ISSUED TO THE INSURED NAMED ABOVE FOR THE POLICY PERIOD INDICATED.&nbsp; NOTWITHSTANDING</div><div class="t" style="left:683px;top:643.8px;font-size:7.6px;color:#1a1a1a;font-weight:bold;transform-origin:0 50%;transform:scaleX(0.9558);-webkit-text-stroke:0.25px #1a1a1a;">ANY REQUIREMENT, TERM OR CONDITION OF ANY CONTRACT OR OTHER DOCUMENT WITH RESPECT TO WHICH THIS EVIDENCE OF PROPERTY INSURANCE MAY</div><div class="t" style="left:683px;top:652.6px;font-size:7.6px;color:#1a1a1a;font-weight:bold;transform-origin:0 50%;transform:scaleX(0.9553);-webkit-text-stroke:0.25px #1a1a1a;">BE ISSUED OR MAY PERTAIN, THE INSURANCE AFFORDED BY THE POLICIES DESCRIBED HEREIN IS SUBJECT TO ALL THE TERMS, EXCLUSIONS AND CONDITIONS</div><div class="t" style="left:683px;top:661.3px;font-size:7.6px;color:#1a1a1a;font-weight:bold;transform-origin:0 50%;transform:scaleX(0.9537);-webkit-text-stroke:0.25px #1a1a1a;">OF SUCH POLICIES.&nbsp; LIMITS SHOWN MAY HAVE BEEN REDUCED BY PAID CLAIMS.</div><div class="t" style="left:679px;top:675.0px;font-size:8.5px;color:#1a1a1a;font-weight:bold;transform-origin:0 50%;transform:scaleX(0.9788);-webkit-text-stroke:0.2px #1a1a1a;">COVERAGE INFORMATION</div><div class="t" style="left:849px;top:676.4px;font-size:7px;color:#444;font-weight:normal;transform-origin:0 50%;transform:scaleX(1.0281);">PERILS INSURED</div><div class="r" style="left:918px;top:671px;width:1px;height:13px;background:#555;"></div><div class="r" style="left:934px;top:671px;width:1px;height:13px;background:#555;"></div><div class="r" style="left:973px;top:671px;width:1px;height:13px;background:#555;"></div><div class="r" style="left:989px;top:671px;width:1px;height:13px;background:#555;"></div><div class="r" style="left:1031px;top:671px;width:1px;height:13px;background:#555;"></div><div class="r" style="left:1046px;top:671px;width:1px;height:13px;background:#555;"></div><div class="r" style="left:1093px;top:671px;width:1px;height:13px;background:#555;"></div><div class="r" style="left:1109px;top:671px;width:1px;height:13px;background:#555;"></div><div class="t" style="left:938.6px;top:676.5px;font-size:6.8px;color:#444;font-weight:normal;transform-origin:0 50%;transform:scaleX(0.9801);">BASIC</div><div class="t" style="left:992.5px;top:676.5px;font-size:6.8px;color:#444;font-weight:normal;transform-origin:0 50%;transform:scaleX(1.0756);">BROAD</div><svg style="left:0;top:0" width="1" height="1"><path d="M1034.6000000000001 673.5200000000001 L1043.8 680.88 M1043.8 673.5200000000001 L1034.6000000000001 680.88" stroke="#111" stroke-width="1.2" fill="none"/></svg><div class="t" style="left:1051px;top:676.5px;font-size:6.8px;color:#444;font-weight:normal;transform-origin:0 50%;transform:scaleX(1.0620);">SPECIAL</div><div class="r" style="left:674.2px;top:683.1px;width:621.6px;height:279.20000000000005px;border:1.6px solid #1a1a1a;box-sizing:border-box;"></div><div class="r" style="left:675px;top:697px;width:620px;height:1px;background:#333;"></div><div class="t" style="left:679px;top:687.1px;font-size:7px;color:#333;font-weight:normal;transform-origin:0 50%;transform:scaleX(1.0319);">COMMERCIAL PROPERTY COVERAGE AMOUNT OF INSURANCE:</div><div class="t" style="left:926px;top:687.3px;font-size:6.5px;color:#222;font-weight:bold;transform-origin:0 50%;transform:scaleX(0.9655);-webkit-text-stroke:0.15px #222;">$</div><div class="t" style="left:936px;top:686.8px;font-size:7px;color:#333;font-weight:normal;transform-origin:0 50%;transform:scaleX(1.0913);">2,298,500</div><div class="t" style="left:1167px;top:687.1px;font-size:7px;color:#333;font-weight:normal;transform-origin:0 50%;transform:scaleX(0.9561);">DED:</div><div class="t" style="left:1188.3px;top:686.8px;font-size:7px;color:#333;font-weight:normal;transform-origin:0 50%;transform:scaleX(1.1123);">2,500</div><div class="r" style="left:934px;top:697px;width:1px;height:265px;background:#333;"></div><div class="r" style="left:950px;top:697px;width:1px;height:265px;background:#333;"></div><div class="r" style="left:965px;top:697px;width:1px;height:265px;background:#333;"></div><div class="r" style="left:981px;top:697px;width:1px;height:265px;background:#333;"></div><div class="t" style="left:936.8px;top:701.3px;font-size:5.2px;color:#222;font-weight:bold;transform-origin:0 50%;transform:scaleX(1.1068);-webkit-text-stroke:0.15px #222;">YES</div><div class="t" style="left:953px;top:701.3px;font-size:5.2px;color:#222;font-weight:bold;transform-origin:0 50%;transform:scaleX(1.2209);-webkit-text-stroke:0.15px #222;">NO</div><div class="t" style="left:967.5px;top:701.3px;font-size:5.2px;color:#222;font-weight:bold;transform-origin:0 50%;transform:scaleX(1.2308);-webkit-text-stroke:0.15px #222;">N/A</div><div class="r" style="left:675px;top:710px;width:620px;height:1px;background:#5a5a5a;"></div><svg style="left:0;top:0" width="1" height="1"><path d="M938.0 713.09 L948.4000000000001 721.41 M948.4000000000001 713.09 L938.0 721.41" stroke="#111" stroke-width="1.3" fill="none"/></svg><div class="r" style="left:675px;top:723px;width:620px;height:1px;background:#5a5a5a;"></div><div class="t" style="left:679px;top:726.7px;font-size:7px;color:#333;font-weight:normal;transform-origin:0 50%;transform:scaleX(1.0285);">BLANKET COVERAGE</div><svg style="left:0;top:0" width="1" height="1"><path d="M953.1999999999999 725.99 L963.6 734.31 M963.6 725.99 L953.1999999999999 734.31" stroke="#111" stroke-width="1.3" fill="none"/></svg><div class="r" style="left:675px;top:736px;width:620px;height:1px;background:#5a5a5a;"></div><div class="t" style="left:679px;top:739.6px;font-size:7px;color:#333;font-weight:normal;transform-origin:0 50%;transform:scaleX(1.0344);">TERRORISM COVERAGE</div><svg style="left:0;top:0" width="1" height="1"><path d="M938.0 738.89 L948.4000000000001 747.2099999999999 M948.4000000000001 738.89 L938.0 747.2099999999999" stroke="#111" stroke-width="1.3" fill="none"/></svg><div class="r" style="left:675px;top:749px;width:620px;height:1px;background:#5a5a5a;"></div><svg style="left:0;top:0" width="1" height="1"><path d="M953.1999999999999 751.7900000000001 L963.6 760.11 M963.6 751.7900000000001 L953.1999999999999 760.11" stroke="#111" stroke-width="1.3" fill="none"/></svg><div class="r" style="left:675px;top:762px;width:620px;height:1px;background:#5a5a5a;"></div><svg style="left:0;top:0" width="1" height="1"><path d="M953.1999999999999 764.69 L963.6 773.01 M963.6 764.69 L953.1999999999999 773.01" stroke="#111" stroke-width="1.3" fill="none"/></svg><div class="r" style="left:675px;top:774px;width:620px;height:1px;background:#5a5a5a;"></div><div class="t" style="left:679px;top:778.3px;font-size:7px;color:#333;font-weight:normal;transform-origin:0 50%;transform:scaleX(1.0324);">LIMITED FUNGUS COVERAGE</div><svg style="left:0;top:0" width="1" height="1"><path d="M953.1999999999999 777.59 L963.6 785.91 M963.6 777.59 L953.1999999999999 785.91" stroke="#111" stroke-width="1.3" fill="none"/></svg><div class="r" style="left:675px;top:787px;width:620px;height:1px;background:#5a5a5a;"></div><div class="t" style="left:679px;top:791.2px;font-size:7px;color:#333;font-weight:normal;transform-origin:0 50%;transform:scaleX(1.0360);">FUNGUS EXCLUSION (If "YES", specify organization's form used)</div><svg style="left:0;top:0" width="1" height="1"><path d="M938.0 790.49 L948.4000000000001 798.81 M948.4000000000001 790.49 L938.0 798.81" stroke="#111" stroke-width="1.3" fill="none"/></svg><div class="r" style="left:675px;top:800px;width:620px;height:1px;background:#5a5a5a;"></div><div class="t" style="left:679px;top:804.1px;font-size:7px;color:#333;font-weight:normal;transform-origin:0 50%;transform:scaleX(1.0368);">REPLACEMENT COST</div><svg style="left:0;top:0" width="1" height="1"><path d="M938.0 803.39 L948.4000000000001 811.7099999999999 M948.4000000000001 803.39 L938.0 811.7099999999999" stroke="#111" stroke-width="1.3" fill="none"/></svg><div class="r" style="left:675px;top:813px;width:620px;height:1px;background:#5a5a5a;"></div><div class="t" style="left:679px;top:817.0px;font-size:7px;color:#333;font-weight:normal;transform-origin:0 50%;transform:scaleX(1.0379);">AGREED VALUE</div><svg style="left:0;top:0" width="1" height="1"><path d="M938.0 816.2900000000001 L948.4000000000001 824.61 M948.4000000000001 816.2900000000001 L938.0 824.61" stroke="#111" stroke-width="1.3" fill="none"/></svg><div class="r" style="left:675px;top:826px;width:620px;height:1px;background:#5a5a5a;"></div><div class="t" style="left:679px;top:829.9px;font-size:7px;color:#333;font-weight:normal;transform-origin:0 50%;transform:scaleX(1.0341);">COINSURANCE</div><svg style="left:0;top:0" width="1" height="1"><path d="M953.1999999999999 829.19 L963.6 837.51 M963.6 829.19 L953.1999999999999 837.51" stroke="#111" stroke-width="1.3" fill="none"/></svg><div class="r" style="left:675px;top:839px;width:620px;height:1px;background:#5a5a5a;"></div><div class="t" style="left:679px;top:842.8px;font-size:7px;color:#333;font-weight:normal;transform-origin:0 50%;transform:scaleX(1.0397);">EQUIPMENT BREAKDOWN (If Applicable)</div><svg style="left:0;top:0" width="1" height="1"><path d="M938.0 842.09 L948.4000000000001 850.41 M948.4000000000001 842.09 L938.0 850.41" stroke="#111" stroke-width="1.3" fill="none"/></svg><div class="r" style="left:675px;top:852px;width:620px;height:1px;background:#5a5a5a;"></div><div class="t" style="left:679px;top:855.7px;font-size:7px;color:#333;font-weight:normal;transform-origin:0 50%;transform:scaleX(1.0377);">ORDINANCE OR LAW</div><svg style="left:0;top:0" width="1" height="1"><path d="M938.0 854.99 L948.4000000000001 863.31 M948.4000000000001 854.99 L938.0 863.31" stroke="#111" stroke-width="1.3" fill="none"/></svg><div class="r" style="left:675px;top:865px;width:620px;height:1px;background:#5a5a5a;"></div><svg style="left:0;top:0" width="1" height="1"><path d="M938.0 867.89 L948.4000000000001 876.2099999999999 M948.4000000000001 867.89 L938.0 876.2099999999999" stroke="#111" stroke-width="1.3" fill="none"/></svg><div class="r" style="left:675px;top:878px;width:620px;height:1px;background:#5a5a5a;"></div><svg style="left:0;top:0" width="1" height="1"><path d="M938.0 880.7900000000001 L948.4000000000001 889.11 M948.4000000000001 880.7900000000001 L938.0 889.11" stroke="#111" stroke-width="1.3" fill="none"/></svg><div class="r" style="left:675px;top:891px;width:620px;height:1px;background:#5a5a5a;"></div><div class="t" style="left:679px;top:894.4px;font-size:7px;color:#333;font-weight:normal;transform-origin:0 50%;transform:scaleX(1.0343);">EARTH MOVEMENT (If Applicable)</div><svg style="left:0;top:0" width="1" height="1"><path d="M953.1999999999999 893.69 L963.6 902.01 M963.6 893.69 L953.1999999999999 902.01" stroke="#111" stroke-width="1.3" fill="none"/></svg><div class="r" style="left:675px;top:903px;width:620px;height:1px;background:#5a5a5a;"></div><div class="t" style="left:679px;top:907.3px;font-size:7px;color:#333;font-weight:normal;transform-origin:0 50%;transform:scaleX(1.0516);">FLOOD (If Applicable)</div><svg style="left:0;top:0" width="1" height="1"><path d="M953.1999999999999 906.59 L963.6 914.91 M963.6 906.59 L953.1999999999999 914.91" stroke="#111" stroke-width="1.3" fill="none"/></svg><div class="r" style="left:675px;top:916px;width:620px;height:1px;background:#5a5a5a;"></div><div class="t" style="left:679px;top:920.2px;font-size:7px;color:#333;font-weight:normal;transform-origin:0 50%;transform:scaleX(1.0225);">WIND / HAIL INCL</div><div class="t" style="left:956.3px;top:921.3px;font-size:6.5px;color:#333;font-weight:normal;transform-origin:0 50%;transform:scaleX(1.2308);">x</div><div class="r" style="left:675px;top:929px;width:620px;height:1px;background:#5a5a5a;"></div><div class="t" style="left:679px;top:933.1px;font-size:7px;color:#333;font-weight:normal;transform-origin:0 50%;transform:scaleX(1.0245);">NAMED STORM INCL</div><div class="t" style="left:956.3px;top:934.2px;font-size:6.5px;color:#333;font-weight:normal;transform-origin:0 50%;transform:scaleX(1.2308);">x</div><div class="r" style="left:675px;top:942px;width:620px;height:1px;background:#5a5a5a;"></div><div class="r" style="left:679.3px;top:713.1px;width:7.2px;height:7.2px;border:1px solid #666;box-sizing:border-box;"></div><div class="t" style="left:681.2px;top:714.8px;font-size:5px;color:#555;font-weight:normal;transform-origin:0 50%;transform:scaleX(1.0787);">I</div><div class="t" style="left:690.5px;top:713.8px;font-size:7px;color:#333;font-weight:normal;transform-origin:0 50%;transform:scaleX(1.0404);">BUSINESS INCOME</div><div class="r" style="left:772px;top:713.1px;width:7.2px;height:7.2px;border:1px solid #666;box-sizing:border-box;"></div><svg style="left:0;top:0" width="1" height="1"><path d="M773.296 714.8568 L777.904 718.5432000000001 M777.904 714.8568 L773.296 718.5432000000001" stroke="#444" stroke-width="0.9" fill="none"/></svg><div class="t" style="left:783.6px;top:713.8px;font-size:7px;color:#333;font-weight:normal;transform-origin:0 50%;transform:scaleX(1.0348);">RENTAL VALUE</div><div class="t" style="left:695px;top:752.5px;font-size:7px;color:#333;font-weight:normal;transform-origin:0 50%;transform:scaleX(1.0324);">IS THERE A TERRORISM-SPECIFIC EXCLUSION?</div><div class="t" style="left:695px;top:765.4px;font-size:7px;color:#333;font-weight:normal;transform-origin:0 50%;transform:scaleX(1.0279);">IS DOMESTIC TERRORISM EXCLUDED?</div><div class="t" style="left:762.5px;top:855.7px;font-size:7px;color:#333;font-weight:normal;transform-origin:0 50%;transform:scaleX(1.0384);">- Coverage for loss to undamaged portion of bldg</div><div class="t" style="left:762.5px;top:868.6px;font-size:7px;color:#333;font-weight:normal;transform-origin:0 50%;transform:scaleX(1.0404);">- Demolition Costs</div><div class="t" style="left:762.5px;top:881.5px;font-size:7px;color:#333;font-weight:normal;transform-origin:0 50%;transform:scaleX(1.0437);">- Incr. Cost of Construction</div><div class="r" style="left:764px;top:919.65px;width:8.2px;height:8.2px;border:1px solid #666;box-sizing:border-box;"></div><svg style="left:0;top:0" width="1" height="1"><path d="M765.476 921.6508 L770.724 925.8492 M770.724 921.6508 L765.476 925.8492" stroke="#444" stroke-width="0.9" fill="none"/></svg><div class="t" style="left:776.2px;top:920.7px;font-size:6px;color:#666;font-weight:normal;transform-origin:0 50%;transform:scaleX(1.0403);">YES</div><div class="r" style="left:795px;top:919.65px;width:8.2px;height:8.2px;border:1px solid #555;box-sizing:border-box;"></div><div class="t" style="left:807px;top:920.7px;font-size:6px;color:#555;font-weight:normal;transform-origin:0 50%;transform:scaleX(1.0556);">NO</div><div class="t" style="left:830px;top:920.2px;font-size:7px;color:#444;font-weight:normal;transform-origin:0 50%;transform:scaleX(1.0409);">Subject to Different Provisions:</div><div class="r" style="left:764px;top:932.55px;width:8.2px;height:8.2px;border:1px solid #666;box-sizing:border-box;"></div><svg style="left:0;top:0" width="1" height="1"><path d="M765.476 934.5508 L770.724 938.7492 M770.724 934.5508 L765.476 938.7492" stroke="#444" stroke-width="0.9" fill="none"/></svg><div class="t" style="left:776.2px;top:933.6px;font-size:6px;color:#666;font-weight:normal;transform-origin:0 50%;transform:scaleX(1.0403);">YES</div><div class="r" style="left:795px;top:932.55px;width:8.2px;height:8.2px;border:1px solid #555;box-sizing:border-box;"></div><div class="t" style="left:807px;top:933.6px;font-size:6px;color:#555;font-weight:normal;transform-origin:0 50%;transform:scaleX(1.0556);">NO</div><div class="t" style="left:830px;top:933.1px;font-size:7px;color:#444;font-weight:normal;transform-origin:0 50%;transform:scaleX(1.0409);">Subject to Different Provisions:</div><div class="t" style="left:679px;top:944.8px;font-size:7px;color:#333;font-weight:normal;transform-origin:0 50%;transform:scaleX(1.0353);">PERMISSION TO WAIVE SUBROGATION IN FAVOR OF MORTGAGE</div><div class="t" style="left:679px;top:953.6px;font-size:7px;color:#333;font-weight:normal;transform-origin:0 50%;transform:scaleX(1.0372);">HOLDER PRIOR TO LOSS</div><svg style="left:0;top:0" width="1" height="1"><path d="M952.6 947.18 L963.4 955.82 M963.4 947.18 L952.6 955.82" stroke="#111" stroke-width="1.4" fill="none"/></svg><div class="t" style="left:986px;top:713.8px;font-size:7px;color:#333;font-weight:normal;transform-origin:0 50%;transform:scaleX(1.0194);">If YES, LIMIT:</div><div class="t" style="left:1037px;top:714.2px;font-size:4.6px;color:#333;font-weight:normal;transform-origin:0 50%;transform:scaleX(1.1789);">72 hours waiting period</div><div class="r" style="left:1132px;top:710.5px;width:15.7px;height:12.9px;border-left:1px solid #444;border-right:1px solid #444;box-sizing:border-box;"></div><svg style="left:0;top:0" width="1" height="1"><path d="M1135.0 713.41 L1144.6 721.09 M1144.6 713.41 L1135.0 721.09" stroke="#111" stroke-width="1.3" fill="none"/></svg><div class="t" style="left:1151.5px;top:713.8px;font-size:7px;color:#333;font-weight:normal;transform-origin:0 50%;transform:scaleX(1.0297);">Actual Loss Sustained; # of months:</div><div class="t" style="left:1277.2px;top:713.4px;font-size:7.2px;color:#333;font-weight:normal;transform-origin:0 50%;transform:scaleX(1.0000);">12</div><div class="t" style="left:986px;top:726.7px;font-size:7px;color:#333;font-weight:normal;transform-origin:0 50%;transform:scaleX(1.0316);">If YES, indicate value(s) reported on property identified above: $</div><div class="t" style="left:986px;top:739.6px;font-size:7px;color:#333;font-weight:normal;transform-origin:0 50%;transform:scaleX(1.0426);">Attach Disclosure Notice / DEC</div><div class="t" style="left:986px;top:778.3px;font-size:7px;color:#333;font-weight:normal;transform-origin:0 50%;transform:scaleX(1.0194);">If YES, LIMIT:</div><div class="t" style="left:1182.3px;top:778.3px;font-size:7px;color:#333;font-weight:normal;transform-origin:0 50%;transform:scaleX(1.0458);">DED:</div><div class="t" style="left:986px;top:829.9px;font-size:7px;color:#333;font-weight:normal;transform-origin:0 50%;transform:scaleX(0.9690);">If YES,</div><div class="t" style="left:1048px;top:829.9px;font-size:7px;color:#333;font-weight:normal;transform-origin:0 50%;transform:scaleX(0.8020);">%</div><div class="t" style="left:986px;top:842.8px;font-size:7px;color:#333;font-weight:normal;transform-origin:0 50%;transform:scaleX(1.0194);">If YES, LIMIT:</div><div class="t" style="left:1182.3px;top:842.8px;font-size:7px;color:#333;font-weight:normal;transform-origin:0 50%;transform:scaleX(1.0458);">DED:</div><div class="t" style="left:1036.5px;top:842.2px;font-size:7.2px;color:#333;font-weight:normal;transform-origin:0 50%;transform:scaleX(1.0828);">included</div><div class="t" style="left:1206.8px;top:842.2px;font-size:7.2px;color:#333;font-weight:normal;transform-origin:0 50%;transform:scaleX(1.0833);">2,500</div><div class="t" style="left:986px;top:855.7px;font-size:7px;color:#333;font-weight:normal;transform-origin:0 50%;transform:scaleX(1.0194);">If YES, LIMIT:</div><div class="t" style="left:1182.3px;top:855.7px;font-size:7px;color:#333;font-weight:normal;transform-origin:0 50%;transform:scaleX(1.0458);">DED:</div><div class="t" style="left:1036.5px;top:855.1px;font-size:7.2px;color:#333;font-weight:normal;transform-origin:0 50%;transform:scaleX(1.0828);">included</div><div class="t" style="left:1206.8px;top:855.1px;font-size:7.2px;color:#333;font-weight:normal;transform-origin:0 50%;transform:scaleX(1.0833);">2,500</div><div class="t" style="left:986px;top:868.6px;font-size:7px;color:#333;font-weight:normal;transform-origin:0 50%;transform:scaleX(1.0194);">If YES, LIMIT:</div><div class="t" style="left:1182.3px;top:868.6px;font-size:7px;color:#333;font-weight:normal;transform-origin:0 50%;transform:scaleX(1.0458);">DED:</div><div class="t" style="left:1036.5px;top:868.0px;font-size:7.2px;color:#333;font-weight:normal;transform-origin:0 50%;transform:scaleX(1.0968);">500,000</div><div class="t" style="left:1206.8px;top:868.0px;font-size:7.2px;color:#333;font-weight:normal;transform-origin:0 50%;transform:scaleX(1.0833);">2,500</div><div class="t" style="left:986px;top:881.5px;font-size:7px;color:#333;font-weight:normal;transform-origin:0 50%;transform:scaleX(1.0194);">If YES, LIMIT:</div><div class="t" style="left:1182.3px;top:881.5px;font-size:7px;color:#333;font-weight:normal;transform-origin:0 50%;transform:scaleX(1.0458);">DED:</div><div class="t" style="left:1036.5px;top:880.9px;font-size:7.2px;color:#333;font-weight:normal;transform-origin:0 50%;transform:scaleX(1.0968);">500,000</div><div class="t" style="left:1206.8px;top:880.9px;font-size:7.2px;color:#333;font-weight:normal;transform-origin:0 50%;transform:scaleX(1.0833);">2,500</div><div class="t" style="left:986px;top:894.4px;font-size:7px;color:#333;font-weight:normal;transform-origin:0 50%;transform:scaleX(1.0194);">If YES, LIMIT:</div><div class="t" style="left:1182.3px;top:894.4px;font-size:7px;color:#333;font-weight:normal;transform-origin:0 50%;transform:scaleX(1.0458);">DED:</div><div class="t" style="left:986px;top:907.3px;font-size:7px;color:#333;font-weight:normal;transform-origin:0 50%;transform:scaleX(1.0194);">If YES, LIMIT:</div><div class="t" style="left:1182.3px;top:907.3px;font-size:7px;color:#333;font-weight:normal;transform-origin:0 50%;transform:scaleX(1.0458);">DED:</div><div class="t" style="left:986px;top:920.2px;font-size:7px;color:#333;font-weight:normal;transform-origin:0 50%;transform:scaleX(1.0194);">If YES, LIMIT:</div><div class="t" style="left:1182.3px;top:920.2px;font-size:7px;color:#333;font-weight:normal;transform-origin:0 50%;transform:scaleX(1.0458);">DED:</div><div class="t" style="left:1036.5px;top:919.6px;font-size:7.2px;color:#333;font-weight:normal;transform-origin:0 50%;transform:scaleX(1.0847);">full limit</div><div class="t" style="left:1206.8px;top:919.6px;font-size:7.2px;color:#333;font-weight:normal;transform-origin:0 50%;transform:scaleX(1.0833);">2,500</div><div class="t" style="left:986px;top:933.1px;font-size:7px;color:#333;font-weight:normal;transform-origin:0 50%;transform:scaleX(1.0194);">If YES, LIMIT:</div><div class="t" style="left:1182.3px;top:933.1px;font-size:7px;color:#333;font-weight:normal;transform-origin:0 50%;transform:scaleX(1.0458);">DED:</div><div class="t" style="left:1036.5px;top:932.5px;font-size:7.2px;color:#333;font-weight:normal;transform-origin:0 50%;transform:scaleX(1.0847);">full limit</div><div class="t" style="left:1206.8px;top:932.5px;font-size:7.2px;color:#333;font-weight:normal;transform-origin:0 50%;transform:scaleX(1.0833);">2,500</div><div class="t" style="left:679px;top:966.0px;font-size:8.5px;color:#1a1a1a;font-weight:bold;transform-origin:0 50%;transform:scaleX(0.9485);-webkit-text-stroke:0.2px #1a1a1a;">CANCELLATION</div><div class="t" style="left:755.8px;top:963.5px;font-size:7.2px;color:#444;font-weight:normal;transform-origin:0 50%;transform:scaleX(1.1574);">30 days' notice of cancellation and 10 days' notice of non-payment to the lender.</div><div class="r" style="left:674.2px;top:974.0px;width:621.6px;height:27.300000000000047px;border:1.6px solid #1a1a1a;box-sizing:border-box;"></div><div class="t" style="left:687px;top:977.9px;font-size:8.6px;color:#1a1a1a;font-weight:bold;transform-origin:0 50%;transform:scaleX(0.9676);-webkit-text-stroke:0.25px #1a1a1a;">SHOULD ANY OF THE ABOVE DESCRIBED POLICIES BE CANCELLED BEFORE THE EXPIRATION DATE THEREOF, NOTICE WILL BE</div><div class="t" style="left:687px;top:988.4px;font-size:8.6px;color:#1a1a1a;font-weight:bold;transform-origin:0 50%;transform:scaleX(0.9666);-webkit-text-stroke:0.25px #1a1a1a;">DELIVERED IN ACCORDANCE WITH THE POLICY PROVISIONS.</div><div class="t" style="left:679px;top:1004.6px;font-size:8.5px;color:#1a1a1a;font-weight:bold;transform-origin:0 50%;transform:scaleX(0.9725);-webkit-text-stroke:0.2px #1a1a1a;">ADDITIONAL INTEREST</div><div class="t" style="left:781.5px;top:1001.7px;font-size:7.2px;color:#444;font-weight:normal;transform-origin:0 50%;transform:scaleX(1.1559);">Ordinance or Law Increased Period of Restoration is included</div><div class="r" style="left:674.2px;top:1013px;width:621.6px;height:70px;border:1.6px solid #1a1a1a;box-sizing:border-box;"></div><div class="r" style="left:690px;top:1014px;width:1px;height:25px;background:#444;"></div><div class="r" style="left:675px;top:1026px;width:15px;height:1px;background:#444;"></div><svg style="left:0;top:0" width="1" height="1"><path d="M678.1999999999999 1029.32 L687.4 1036.68 M687.4 1029.32 L678.1999999999999 1036.68" stroke="#111" stroke-width="1.2" fill="none"/></svg><div class="t" style="left:695px;top:1017.1px;font-size:5.6px;color:#555;font-weight:bold;transform-origin:0 50%;transform:scaleX(1.0492);-webkit-text-stroke:0.15px #555;">CONTRACT OF SALE</div><div class="t" style="left:695px;top:1030.5px;font-size:5.6px;color:#555;font-weight:bold;transform-origin:0 50%;transform:scaleX(1.0771);-webkit-text-stroke:0.15px #555;">MORTGAGEE</div><div class="r" style="left:779px;top:1014px;width:1px;height:25px;background:#444;"></div><div class="r" style="left:795px;top:1014px;width:1px;height:25px;background:#444;"></div><div class="r" style="left:779px;top:1026px;width:17px;height:1px;background:#444;"></div><div class="t" style="left:786px;top:1017.8px;font-size:7.5px;color:#222;font-weight:normal;transform-origin:0 50%;transform:scaleX(1.1963);">X</div><div class="t" style="left:799.3px;top:1017.1px;font-size:5.6px;color:#555;font-weight:bold;transform-origin:0 50%;transform:scaleX(1.0671);-webkit-text-stroke:0.15px #555;">LENDER'S LOSS PAYABLE</div><div class="r" style="left:900px;top:1013.8px;width:15.8px;height:12.8px;border:1px solid #444;border-top:none;box-sizing:border-box;"></div><div class="t" style="left:905px;top:1017.8px;font-size:7.5px;color:#222;font-weight:normal;transform-origin:0 50%;transform:scaleX(1.1963);">X</div><div class="t" style="left:919.4px;top:1017.1px;font-size:5.6px;color:#555;font-weight:bold;transform-origin:0 50%;transform:scaleX(1.0767);-webkit-text-stroke:0.15px #555;">LOSS PAYEE</div><div class="r" style="left:981px;top:1014px;width:1px;height:55px;background:#333;"></div><div class="r" style="left:675px;top:1039px;width:307px;height:1px;background:#444;"></div><div class="t" style="left:986px;top:1016.1px;font-size:5.4px;color:#222;font-weight:bold;transform-origin:0 50%;transform:scaleX(1.1340);-webkit-text-stroke:0.15px #222;">LENDER SERVICING AGENT NAME AND ADDRESS</div><div class="t" style="left:679px;top:1043.3px;font-size:5.4px;color:#222;font-weight:bold;transform-origin:0 50%;transform:scaleX(1.1413);-webkit-text-stroke:0.15px #222;">NAME AND ADDRESS</div><div class="r" style="left:688.4px;top:1059.4px;width:227.10000000000002px;height:9.599999999999909px;background:#000;"></div><div class="r" style="left:691px;top:443px;width:72px;height:56px;border-radius:50%;background:radial-gradient(ellipse at 50% 45%,rgba(235,235,235,0.96) 0%,rgba(215,215,215,0.93) 28%,rgba(185,185,185,0.88) 46%,rgba(150,150,150,0.6) 58%,rgba(150,150,150,0.25) 66%,rgba(255,255,255,0) 72%);filter:blur(1.5px);"></div><div class="r" style="left:718px;top:461px;width:18px;height:7px;border-radius:50%;background:rgba(250,250,250,0.7);filter:blur(2px);"></div><svg style="left:0;top:0" width="1" height="1">
<circle cx="317.6" cy="122.6" r="2.7" fill="#62bba3"/>
<line x1="321.8" y1="114.3" x2="327.0" y2="123.0" stroke="#62bba3" stroke-width="5.4" stroke-linecap="round"/>
<line x1="326.8" y1="106.7" x2="332.0" y2="115.5" stroke="#62bba3" stroke-width="5.4" stroke-linecap="round"/>
<circle cx="335.6" cy="122.6" r="2.7" fill="#62bba3"/>
</svg><svg style="left:0;top:0" width="1" height="1" fill="none" stroke="#d2d5d4" stroke-width="1.45" stroke-linecap="round">
<path d="M376.3 119.6 A6.5 6.5 0 1 1 383.7 119.6 Z" stroke-linejoin="round"/>
<circle cx="379.9" cy="114.9" r="1.5" stroke-width="1.3"/>
<line x1="381" y1="113.8" x2="382.8" y2="112"/>
</svg><div class="t" style="left:396px;top:107.3px;font-size:13.6px;color:#d2d5d4;font-weight:normal;-webkit-text-stroke:0.3px #d2d5d4;transform-origin:0 50%;transform:scaleX(0.9922);">Dashboard</div><svg style="left:0;top:0" width="1" height="1" fill="none" stroke="#d2d5d4" stroke-width="1.35" stroke-linecap="round" stroke-linejoin="round">
<path d="M491.6 107.8 V120.4 H504.2"/>
<path d="M491.8 113.4 C494 110 496.5 109.2 498 110.2 C500 111.6 501.5 113.6 504.4 113.7"/>
<line x1="494.6" y1="119.8" x2="494.6" y2="116.6"/><line x1="497.6" y1="119.8" x2="497.6" y2="114.6"/><line x1="500.6" y1="119.8" x2="500.6" y2="116.2"/><line x1="503.2" y1="119.8" x2="503.2" y2="117"/>
</svg><div class="t" style="left:513px;top:107.3px;font-size:13.6px;color:#d2d5d4;font-weight:normal;-webkit-text-stroke:0.3px #d2d5d4;transform-origin:0 50%;transform:scaleX(1.0109);">Market</div><svg style="left:0;top:0" width="1" height="1" fill="none" stroke="#6cc3ac" stroke-width="1.4" stroke-linejoin="round">
<path d="M585.2 108.5 Q585.2 107.6 586.2 107.6 H590.2 L592 109.4 H597.6 Q598.6 109.4 598.6 110.4 V119.3 Q598.6 120.3 597.6 120.3 H586.2 Q585.2 120.3 585.2 119.3 Z"/>
<line x1="585.2" y1="111.6" x2="598.6" y2="111.6"/>
</svg><div class="t" style="left:607px;top:107.3px;font-size:13.6px;color:#6cc3ac;font-weight:normal;-webkit-text-stroke:0.3px #6cc3ac;transform-origin:0 50%;transform:scaleX(0.9862);">Cases</div><div class="r" style="left:574px;top:138px;width:81px;height:2.5px;background:#7fd0c0;"></div><svg style="left:0;top:0" width="1" height="1" fill="none" stroke="#d2d5d4" stroke-width="1.4" stroke-linecap="round" stroke-linejoin="round">
<rect x="674.5" y="107.5" width="13.2" height="13.2" rx="3"/>
<path d="M678.4 114.3 L680.4 116.2 L684 112.2"/>
</svg><div class="t" style="left:697px;top:107.3px;font-size:13.6px;color:#d2d5d4;font-weight:normal;-webkit-text-stroke:0.3px #d2d5d4;transform-origin:0 50%;transform:scaleX(0.9784);">Tasks</div><svg style="left:0;top:0" width="1" height="1" fill="none" stroke="#d2d5d4" stroke-width="1.3" stroke-linecap="round" stroke-linejoin="round">
<path d="M770 120.8 H762.5 Q761.8 120.8 761.8 120 V108.2 Q761.8 107.4 762.5 107.4 H768.6 L772.4 111.2 V113"/>
<line x1="764" y1="111.5" x2="767" y2="111.5"/><line x1="764" y1="114" x2="768" y2="114"/><line x1="764" y1="116.5" x2="767" y2="116.5"/>
<path d="M773.5 114.8 L776.2 115.8 V118 Q776.2 120.2 773.5 121.3 Q770.8 120.2 770.8 118 V115.8 Z"/>
</svg><div class="t" style="left:784px;top:107.3px;font-size:13.6px;color:#d2d5d4;font-weight:normal;-webkit-text-stroke:0.3px #d2d5d4;transform-origin:0 50%;transform:scaleX(0.9795);">Risk Profiles</div><div class="r" style="left:1107px;top:103px;width:96px;height:23.5px;background:#235c27;border:1px solid #2f7236;box-sizing:border-box;border-radius:12px;"></div><svg style="left:0;top:0" width="1" height="1" fill="none" stroke="#8fd98f" stroke-width="1.6" stroke-linecap="round" stroke-linejoin="round">
<line x1="1120" y1="110.6" x2="1127.6" y2="118.2"/><path d="M1127.6 112.2 V118.2 H1121.6"/></svg><div class="t" style="left:1135.8px;top:108.4px;font-size:12.5px;color:#8fd98f;font-weight:bold;transform-origin:0 50%;transform:scaleX(0.9705);">NPI: $5.79</div><div class="r" style="left:1215px;top:103px;width:96px;height:23.5px;background:#235c27;border:1px solid #2f7236;box-sizing:border-box;border-radius:12px;"></div><svg style="left:0;top:0" width="1" height="1" fill="none" stroke="#8fd98f" stroke-width="1.6" stroke-linecap="round" stroke-linejoin="round">
<line x1="1228" y1="110.6" x2="1235.6" y2="118.2"/><path d="M1235.6 112.2 V118.2 H1229.6"/></svg><div class="t" style="left:1243.5px;top:108.4px;font-size:12.5px;color:#8fd98f;font-weight:bold;transform-origin:0 50%;transform:scaleX(0.9820);">NLI: $6.56</div><div class="r" style="left:1323px;top:97px;width:316px;height:36px;background:#000;border:1px solid #3b3d3d;box-sizing:border-box;border-radius:6px;"></div><svg style="left:0;top:0" width="1" height="1" fill="none" stroke="#e6e6e6" stroke-width="1.6" stroke-linecap="round">
<circle cx="1342.2" cy="114" r="4.6"/><line x1="1345.6" y1="117.4" x2="1349.6" y2="121.4"/></svg><div class="t" style="left:1359.7px;top:108.4px;font-size:13.5px;color:#ececec;font-weight:normal;-webkit-text-stroke:0.5px #ececec;transform-origin:0 50%;transform:scaleX(1.0038);">Search ...</div><div class="r" style="left:1669px;top:103px;width:24px;height:24px;border-radius:50%;background:#9ba2a1;"></div><div class="t" style="left:1681px;top:110.6px;font-size:9px;color:#f4f4f4;font-weight:normal;transform:translateX(-50%) ;">SY</div><div class="r" style="left:58px;top:199.5px;width:1802px;height:1.0px;background:#e6eaea;"></div><div class="t" style="left:323px;top:160.4px;font-size:20.6px;color:#555;font-weight:normal;transform-origin:0 50%;transform:scaleX(0.9679);">Cases</div><svg style="left:0;top:0" width="1" height="1" fill="none" stroke="#666" stroke-width="1.5" stroke-linecap="round" stroke-linejoin="round"><path d="M402 166.5 L406 170.5 L402 174.5"/></svg><div class="r" style="left:428px;top:158.5px;width:48px;height:24px;background:#eef5fc;border:1px solid #d6dde3;box-sizing:border-box;border-radius:12px;"></div><div class="t" style="left:437.2px;top:164.9px;font-size:12.4px;color:#3572c6;font-weight:bold;transform-origin:0 50%;transform:scaleX(0.9472);">Open</div><div class="t" style="left:485px;top:160.4px;font-size:20.6px;color:#555;font-weight:normal;transform-origin:0 50%;transform:scaleX(1.0290);">City View Apartments</div><svg style="left:0;top:0" width="1" height="1" fill="none" stroke="#666" stroke-width="1.5" stroke-linecap="round" stroke-linejoin="round"><path d="M709 166.5 L713 170.5 L709 174.5"/></svg><div class="t" style="left:735px;top:160.4px;font-size:20.6px;color:#222;font-weight:normal;transform-origin:0 50%;transform:scaleX(1.0073);">New Policy</div></body></html>
